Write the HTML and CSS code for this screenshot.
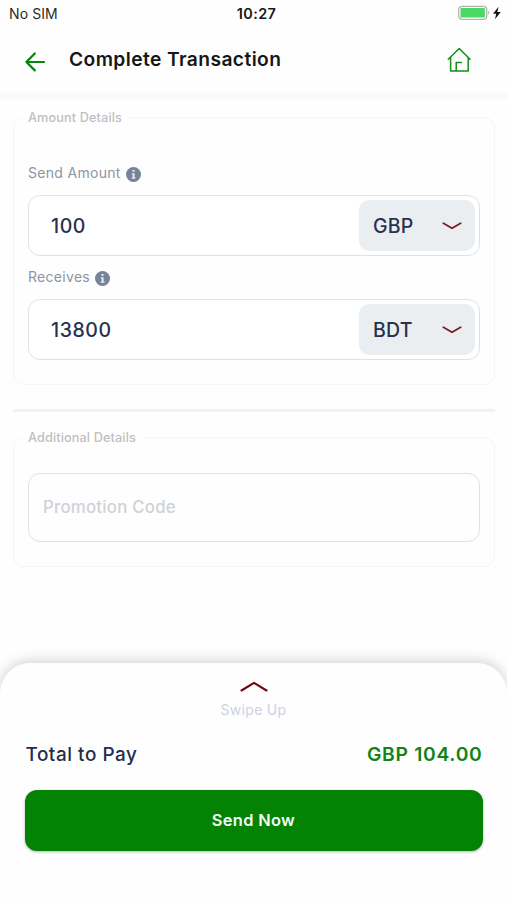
FILE: index.html
```html
<!DOCTYPE html>
<html lang="en">
<head>
<meta charset="utf-8">
<title>Complete Transaction</title>
<link rel="stylesheet" href="styles.css">
</head>
<body>
<div class="app">
  <div class="status">
    <span class="carrier">No SIM</span>
    <span class="time">10:27</span>
    <svg class="battery" width="44" height="16" viewBox="0 0 44 16">
      <rect x="0.7" y="1.3" width="28" height="13" rx="3.4" fill="#fff" stroke="#b5b1b7" stroke-width="1.3"/>
      <rect x="2.5" y="3" width="24.4" height="9.6" rx="1.2" fill="#4bd964"/>
      <path d="M30.2 5.6q2 2.2 0 4.4z" fill="#aaa"/>
      <path d="M40.6 1.8L35 8.8h3.2l-1.2 5.4 5.8-7.2h-3.5z" fill="#111"/>
    </svg>
  </div>
  <header class="header">
    <svg class="back" width="22" height="22" viewBox="0 0 22 22" fill="none" stroke="#078407" stroke-width="2.2" stroke-linecap="round" stroke-linejoin="round">
      <path d="M20 11H2.6M10.8 2.4L2.4 11l8.4 8.4"/>
    </svg>
    <h1 class="title">Complete Transaction</h1>
    <svg class="home" width="24" height="26" viewBox="0 0 24 26" fill="none" stroke="#168a1a" stroke-width="1.5" stroke-linecap="round" stroke-linejoin="round">
      <path d="M1.3 12.3L12.2 1.5 23 12.3M3.6 10.4v13.6h17.6V10.4M9.2 24V15.6h5.2"/>
    </svg>
  </header>
  <main class="content">
    <fieldset class="card amounts">
      <legend>Amount Details</legend>
      <div class="label send-label"><span>Send Amount</span>
        <svg width="15" height="15" viewBox="0 0 14 14"><circle cx="7" cy="7" r="7" fill="#778397"/><path d="M6 2.8h2v1.7H6zM5.4 5.9H8v3.9h.8v1.1H5.3V9.8h.9V7h-.8z" fill="#e9edf2"/></svg>
      </div>
      <div class="field">
        <span class="value">100</span>
        <div class="currency">GBP
          <svg width="20" height="8" viewBox="0 0 20 8" fill="none" stroke="#7c1c24" stroke-width="1.8" stroke-linecap="round" stroke-linejoin="round"><path d="M1.4 1.2L10 6.2l8.6-5"/></svg>
        </div>
      </div>
      <div class="label receive-label"><span>Receives</span>
        <svg width="15" height="15" viewBox="0 0 14 14"><circle cx="7" cy="7" r="7" fill="#778397"/><path d="M6 2.8h2v1.7H6zM5.4 5.9H8v3.9h.8v1.1H5.3V9.8h.9V7h-.8z" fill="#e9edf2"/></svg>
      </div>
      <div class="field">
        <span class="value">13800</span>
        <div class="currency">BDT
          <svg width="20" height="8" viewBox="0 0 20 8" fill="none" stroke="#7c1c24" stroke-width="1.8" stroke-linecap="round" stroke-linejoin="round"><path d="M1.4 1.2L10 6.2l8.6-5"/></svg>
        </div>
      </div>
    </fieldset>
    <div class="divider"></div>
    <fieldset class="card additional">
      <legend>Additional Details</legend>
      <div class="promo">Promotion Code</div>
    </fieldset>
  </main>
  <footer class="sheet">
    <svg class="up" width="28" height="12" viewBox="0 0 28 12" fill="none" stroke="#6d0710" stroke-width="2.1" stroke-linecap="round" stroke-linejoin="round"><path d="M1.5 9.5L14 1.8l12.5 7.7"/></svg>
    <span class="swipe">Swipe Up</span>
    <div class="total"><span class="total-label">Total to Pay</span><span class="sum">GBP 104.00</span></div>
    <div class="send">Send Now</div>
  </footer>
</div>
</body>
</html>
```

FILE: styles.css
```css
* { box-sizing: border-box; }
body { margin: 0; background: #fefefe; font-family: Inter, "Liberation Sans", sans-serif; }
.app { width: 507px; height: 900px; display: flex; flex-direction: column; overflow: hidden; }
.status {
  height: 28px; flex: none; padding: 0 6px 0 9px;
  display: grid; grid-template-columns: 1fr auto 1fr; align-items: center;
  font-size: 14px; line-height: 18px; color: #2b2b2b;
}
.carrier { letter-spacing: 0.1px; }
.time { margin-left: 3px; font-size: 14.4px; font-weight: 600; letter-spacing: 0.4px; color: #161616; }
.battery { justify-self: end; margin: -2px -1px 0 0; }
.header {
  height: 64px; flex: none; padding: 0 36px 0 24px;
  display: flex; align-items: center;
  box-shadow: 0 8px 0 #fafafa;
}
.back { margin-top: 4px; }
.title { margin: -3px auto 0 23px; font-size: 19.2px; line-height: 24px; font-weight: 600; letter-spacing: 0.42px; color: #161616; }
.home { margin-top: -1px; }
.content { flex: 1; padding: 17px 12px 0 13px; }
.card { min-width: 0; margin: 0; border: 1px solid #f5f5f6; border-radius: 11px; }
.amounts { height: 276px; padding: 37px 14px 0; }
.additional { height: 138px; padding: 27px 14px 0; }
.card legend { margin-left: -7px; padding: 0 7px; font-size: 12.7px; line-height: 17px; font-weight: 500; letter-spacing: 0.12px; color: #bfbfc1; }
.label { display: flex; align-items: center; gap: 5px; height: 20px; font-size: 14px; letter-spacing: 0.3px; color: #8b95a3; }
.label span { margin-top: -1px; }
.label svg { margin-top: 2px; }
.send-label { margin-bottom: 12px; }
.receive-label { margin: 11px 0 12px; }
.field {
  height: 61px; padding: 0 4px 0 22px; border: 1px solid #dfe1e4; border-radius: 12px;
  display: flex; align-items: center; justify-content: space-between; background: #fff;
}
.value, .currency { font-size: 19.5px; font-weight: 500; color: #28324f; }
.value { margin-top: 1px; letter-spacing: 0.55px; }
.currency {
  width: 116px; height: 51px; padding: 1px 13px 0 14px; border-radius: 10px; background: #ebeef1;
  display: flex; align-items: center; justify-content: space-between; letter-spacing: 0.2px;
}
.divider { height: 3px; margin: 24px 0 17px; background: #f0f2f3; }
.promo {
  height: 69px; padding: 0 14px 1px; border: 1px solid #dfe1e4; border-radius: 12px;
  display: flex; align-items: center; font-size: 16.8px; font-weight: 500; letter-spacing: 0.25px; color: #ced2d7;
}
.sheet {
  height: 237px; flex: none; padding: 18px 24.5px 0; border-radius: 30px 30px 0 0; background: #fefefe;
  box-shadow: 0 -2px 13px rgba(0, 0, 0, 0.18);
  display: flex; flex-direction: column; align-items: center;
}
.up { flex: none; }
.swipe { margin-top: 8px; font-size: 14px; line-height: 18px; letter-spacing: 0.3px; color: #cdd2e1; }
.total {
  width: 100%; margin-top: 23px; padding-left: 1px; display: flex; justify-content: space-between;
  font-size: 18.9px; line-height: 24px; font-weight: 550; letter-spacing: 0.55px; color: #222d4b;
}
.total-label { padding-top: 1px; }
.sum { height: 24px; font-size: 19.3px; font-weight: 600; letter-spacing: 0.7px; color: #118413; }
.total { height: 24px; }
.send {
  width: 100%; height: 61px; margin-top: 24px; border-radius: 12px; background: #038203;
  box-shadow: 0 1px 3px rgba(0, 0, 0, 0.3); padding-bottom: 1px;
  display: flex; align-items: center; justify-content: center;
  font-size: 16.4px; font-weight: 600; letter-spacing: 0.35px; color: #f3faf1;
}
```
